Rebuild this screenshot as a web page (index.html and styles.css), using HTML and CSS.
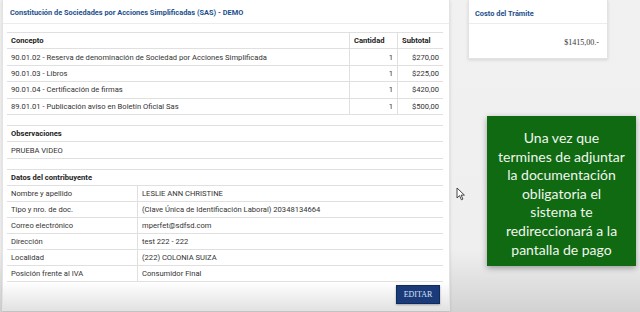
FILE: index.html
```html
<!DOCTYPE html>
<html lang="es">
  <head>
    <meta charset="UTF-8" />
    <meta name="viewport" content="width=device-width, initial-scale=1.0" />
    <title>Constitución SAS - Resumen</title>
    <link rel="stylesheet" href="styles.css">
  </head>
  <body>
    <div class="page">
      <div class="card main">
        <div class="card-title">Constitución de Sociedades por Acciones Simplificadas (SAS) - DEMO</div>

        <div class="card-body">
          <table class="grid items">
            <tr class="head">
              <td>Concepto</td>
              <td class="qty">Cantidad</td>
              <td class="sub">Subtotal</td>
            </tr>
            <tr>
              <td>90.01.02 - Reserva de denominación de Sociedad por Acciones Simplificada</td>
              <td class="qty num">1</td>
              <td class="sub num">$270,00</td>
            </tr>
            <tr>
              <td>90.01.03 - Libros</td>
              <td class="qty num">1</td>
              <td class="sub num">$225,00</td>
            </tr>
            <tr>
              <td>90.01.04 - Certificación de firmas</td>
              <td class="qty num">1</td>
              <td class="sub num">$420,00</td>
            </tr>
            <tr>
              <td>89.01.01 - Publicación aviso en Boletín Oficial Sas</td>
              <td class="qty num">1</td>
              <td class="sub num">$500,00</td>
            </tr>
          </table>

          <table class="grid block">
            <tr class="head"><td>Observaciones</td></tr>
            <tr><td>PRUEBA VIDEO</td></tr>
          </table>

          <table class="grid block person">
            <tr class="head"><td colspan="2">Datos del contribuyente</td></tr>
            <tr><td class="label">Nombre y apellido</td><td>LESLIE ANN CHRISTINE</td></tr>
            <tr><td class="label">Tipo y nro. de doc.</td><td>(Clave Única de Identificación Laboral) 20348134664</td></tr>
            <tr><td class="label">Correo electrónico</td><td>mperfet@sdfsd.com</td></tr>
            <tr><td class="label">Dirección</td><td>test 222 - 222</td></tr>
            <tr><td class="label">Localidad</td><td>(222) COLONIA SUIZA</td></tr>
            <tr><td class="label">Posición frente al IVA</td><td>Consumidor Final</td></tr>
          </table>
        </div>

        <div class="card-footer">
          <button class="btn-edit">EDITAR</button>
        </div>
      </div>

      <div class="side">
        <div class="card cost">
          <div class="card-title">Costo del Trámite</div>
          <div class="cost-total">$1415,00.-</div>
        </div>

        <div class="note">
          Una vez que<br>
          termines de adjuntar<br>
          la documentación<br>
          obligatoria el<br>
          sistema te<br>
          redireccionará a la<br>
          pantalla de pago
        </div>
      </div>
    </div>

    <svg class="cursor" width="10" height="14" viewBox="0 0 10 14">
      <path d="M1 1 L1 11 L3.5 8.6 L5.4 12.8 L6.9 12.1 L5.1 8.1 L8.4 8.1 Z" fill="#fff" stroke="#333" stroke-width="0.9" stroke-linejoin="round" />
    </svg>
  </body>
</html>
```

FILE: styles.css
```css
body {
  margin: 0;
  height: 312px;
  overflow: hidden;
  font-family: Roboto, "Liberation Sans", sans-serif;
  background: linear-gradient(to bottom, #f1f1f1 0, #efefef 250px, #d2d2d2 312px);
  color: #333;
  position: relative;
}

.page {
  display: flex;
  align-items: flex-start;
  padding: 0 0 0 2px;
}

.card {
  background-color: #fff;
  border: 1px solid #e3e3e3;
  box-shadow: 0 1px 3px rgba(0, 0, 0, 0.12);
}

.card-title {
  color: #1d4f8c;
  font-weight: bold;
  font-size: 7.4px;
  height: 23px;
  line-height: 25px;
  padding-left: 7px;
  border-bottom: 1px solid #ececec;
}

.main {
  width: 446px;
  height: 310px;
  border-top: none;
  display: flex;
  flex-direction: column;
  background: linear-gradient(to bottom, #fff 0, #fff 282px, #e2e2e2 310px);
}

.card-body {
  padding: 8px 6px 0 4px;
}

.grid {
  width: 100%;
  border-collapse: collapse;
  font-size: 7.6px;
  background-color: #fff;
}

.grid td {
  border-top: 1px solid #e0e0e0;
  border-bottom: 1px solid #e0e0e0;
  height: 15.4px;
  padding: 0 4px;
  white-space: nowrap;
}

.grid .head td {
  font-weight: bold;
  color: #222;
}

.items .qty {
  width: 39px;
  border-left: 1px solid #e0e0e0;
}

.items .sub {
  width: 37px;
  border-left: 1px solid #e0e0e0;
}

.items .qty.num,
.items .sub.num {
  text-align: right;
}

.items .head .qty,
.items .head .sub {
  text-align: left;
}

.block {
  margin-top: 10px;
}

.person .label {
  width: 122px;
  border-right: 1px solid #e0e0e0;
}

.person td {
  height: 15px;
}

.card-footer {
  margin-top: auto;
  display: flex;
  justify-content: flex-end;
  padding: 0 9px 6px 0;
}

.btn-edit {
  background-color: #1b3a7a;
  color: #d9e3f5;
  border: 1px solid #0f2a5c;
  font-family: "Liberation Serif", serif;
  font-size: 8px;
  width: 44px;
  height: 19px;
  padding: 0;
  box-shadow: 0 1px 2px rgba(0, 0, 0, 0.3);
}

.side {
  margin-left: 18px;
  width: 170px;
}

.cost {
  width: 138px;
  height: 58px;
  border-top: none;
}

.cost .card-title {
  padding-left: 6px;
  line-height: 27px;
}

.cost-total {
  text-align: right;
  font-family: "Liberation Serif", serif;
  font-size: 8px;
  color: #333;
  padding: 14px 8px 0 0;
}

.note {
  margin: 57px 0 0 19px;
  width: 149px;
  height: 150px;
  box-sizing: border-box;
  background-color: #0f6a12;
  color: #f1f6ee;
  font-family: Lato, "Open Sans", sans-serif;
  font-size: 14px;
  line-height: 18.6px;
  text-align: center;
  white-space: nowrap;
  padding: 13px 0 0;
  box-shadow: 0 2px 6px rgba(0, 0, 0, 0.35);
}

.cursor {
  position: absolute;
  left: 456px;
  top: 187px;
}
```
